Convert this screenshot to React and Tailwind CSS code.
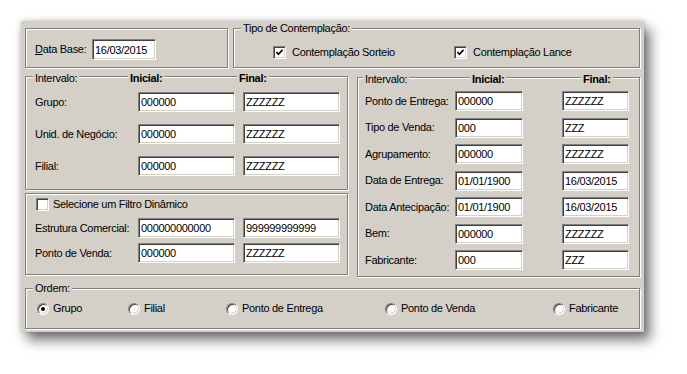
import React from "react";

// classic win9x look: etched group boxes, sunken edits
const etched = "border border-[#808080] shadow-[inset_1px_1px_0_#fff,1px_1px_0_#fff]";
const sunken =
  "border border-t-[#808080] border-l-[#808080] border-b-white border-r-white shadow-[inset_1px_1px_0_#404040,inset_-1px_-1px_0_#d4d0c8]";

const Edit = ({ value, className }) => (
  <input
    readOnly
    value={value}
    className={`h-[20px] bg-white px-[2px] text-black outline-none ${sunken} ${className}`}
  />
);

const Check = ({ checked }) => (
  <div className={`w-[13px] h-[13px] flex-none bg-white flex items-center justify-center ${sunken}`}>
    {checked && (
      <svg width="7" height="7" viewBox="0 0 7 7">
        <path d="M0.5 3 L2.5 5.2 L6.5 0.8" fill="none" stroke="#000" strokeWidth="1.6" />
      </svg>
    )}
  </div>
);

const Radio = ({ checked }) => (
  <div
    className={`w-[12px] h-[12px] flex-none rounded-full bg-white flex items-center justify-center ${sunken}`}
  >
    {checked && <div className="w-[4px] h-[4px] rounded-full bg-black" />}
  </div>
);

const Cap = ({ children, className = "" }) => (
  <span className={`bg-[#d4d0c8] px-[2px] leading-[13px] ${className}`}>{children}</span>
);

const leftRows = [
  ["Grupo:", "000000", "ZZZZZZ"],
  ["Unid. de Negócio:", "000000", "ZZZZZZ"],
  ["Filial:", "000000", "ZZZZZZ"],
];

const rightRows = [
  ["Ponto de Entrega:", "000000", "ZZZZZZ"],
  ["Tipo de Venda:", "000", "ZZZ"],
  ["Agrupamento:", "000000", "ZZZZZZ"],
  ["Data de Entrega:", "01/01/1900", "16/03/2015"],
  ["Data Antecipação:", "01/01/1900", "16/03/2015"],
  ["Bem:", "000000", "ZZZZZZ"],
  ["Fabricante:", "000", "ZZZ"],
];

const ordem = [
  ["Grupo", "w-[91px]", true],
  ["Filial", "w-[98px]", false],
  ["Ponto de Entrega", "w-[159px]", false],
  ["Ponto de Venda", "w-[168px]", false],
  ["Fabricante", "flex-1", false],
];

export default function App() {
  return (
    <div className="w-[687px] h-[374px] bg-white pt-[21px] pl-[21px] font-['Liberation_Sans',Arial,sans-serif] text-[11px] tracking-[-0.3px] text-black">
      <div className="w-[623px] h-[311px] bg-[#d4d0c8] px-[4px] pt-[7px] shadow-[6px_8px_12px_rgba(0,0,0,0.55),0_0_6px_rgba(0,0,0,0.2)]">
        {/* top row */}
        <div className="flex gap-[5px] h-[40px]">
          <div className={`w-[203px] h-[40px] flex items-center pl-[9px] pt-[3px] ${etched}`}>
            <span className="w-[57px] flex-none">
              <span className="underline">D</span>ata Base:
            </span>
            <Edit value="16/03/2015" className="w-[64px] h-[21px]" />
          </div>
          <div className={`flex-1 h-[40px] ${etched}`}>
            <div className="flex h-[13px] -mt-[7px] pl-[7px]">
              <Cap>Tipo de Contemplação:</Cap>
            </div>
            <div className="flex mt-[11px] pl-[39px] h-[13px] items-center">
              <div className="w-[181px] flex items-center gap-[6px]">
                <Check checked />
                <span>Contemplação Sorteio</span>
              </div>
              <div className="flex items-center gap-[6px]">
                <Check checked />
                <span>Contemplação Lance</span>
              </div>
            </div>
          </div>
        </div>

        {/* middle */}
        <div className="flex gap-[9px] mt-[8px] items-start">
          <div className="w-[323px] flex-none">
            <div className={`h-[114px] ${etched}`}>
              <div className="flex h-[13px] -mt-[7px]">
                <div className="w-[102px] pl-[7px]">
                  <Cap>Intervalo:</Cap>
                </div>
                <div className="w-[109px]">
                  <Cap className="font-bold">Inicial:</Cap>
                </div>
                <div>
                  <Cap className="font-bold">Final:</Cap>
                </div>
              </div>
              <div className="mt-[9px] flex flex-col gap-[12px] pl-[9px]">
                {leftRows.map(([label, a, b]) => (
                  <div key={label} className="flex items-center h-[20px]">
                    <span className="w-[103px] flex-none">{label}</span>
                    <Edit value={a} className="w-[97px]" />
                    <Edit value={b} className="w-[97px] ml-[8px]" />
                  </div>
                ))}
              </div>
            </div>
            <div className={`h-[82px] mt-[3px] ${etched}`}>
              <div className="flex items-center gap-[4px] mt-[4px] pl-[10px] h-[13px]">
                <Check />
                <span>Selecione um Filtro Dinâmico</span>
              </div>
              <div className="mt-[7px] flex flex-col gap-[5px] pl-[9px]">
                <div className="flex items-center h-[20px]">
                  <span className="w-[103px] flex-none">Estrutura Comercial:</span>
                  <Edit value="000000000000" className="w-[97px]" />
                  <Edit value="999999999999" className="w-[97px] ml-[8px]" />
                </div>
                <div className="flex items-center h-[20px]">
                  <span className="w-[103px] flex-none">Ponto de Venda:</span>
                  <Edit value="000000" className="w-[97px]" />
                  <Edit value="ZZZZZZ" className="w-[97px] ml-[8px]" />
                </div>
              </div>
            </div>
          </div>

          <div className={`flex-1 h-[200px] mt-[1px] ${etched}`}>
            <div className="flex h-[13px] -mt-[7px]">
              <div className="w-[112px] pl-[5px]">
                <Cap>Intervalo:</Cap>
              </div>
              <div className="w-[111px]">
                <Cap className="font-bold">Inicial:</Cap>
              </div>
              <div>
                <Cap className="font-bold">Final:</Cap>
              </div>
            </div>
            <div className="mt-[7px] flex flex-col gap-[6.5px] pl-[7px]">
              {rightRows.map(([label, a, b]) => (
                <div key={label} className="flex items-center h-[20px]">
                  <span className="w-[90px] flex-none whitespace-nowrap">{label}</span>
                  <Edit value={a} className="w-[68px]" />
                  <Edit value={b} className="w-[67px] ml-[39px]" />
                </div>
              ))}
            </div>
          </div>
        </div>

        {/* ordem */}
        <div className={`h-[41px] mt-[11px] ${etched}`}>
          <div className="flex h-[13px] -mt-[7px] pl-[7px]">
            <Cap>Ordem:</Cap>
          </div>
          <div className="flex mt-[7px] h-[13px] items-center pl-[11px]">
            {ordem.map(([label, w, on]) => (
              <div key={label} className={`${w} flex items-center gap-[4px]`}>
                <Radio checked={on} />
                <span>{label}</span>
              </div>
            ))}
          </div>
        </div>
      </div>
    </div>
  );
}
